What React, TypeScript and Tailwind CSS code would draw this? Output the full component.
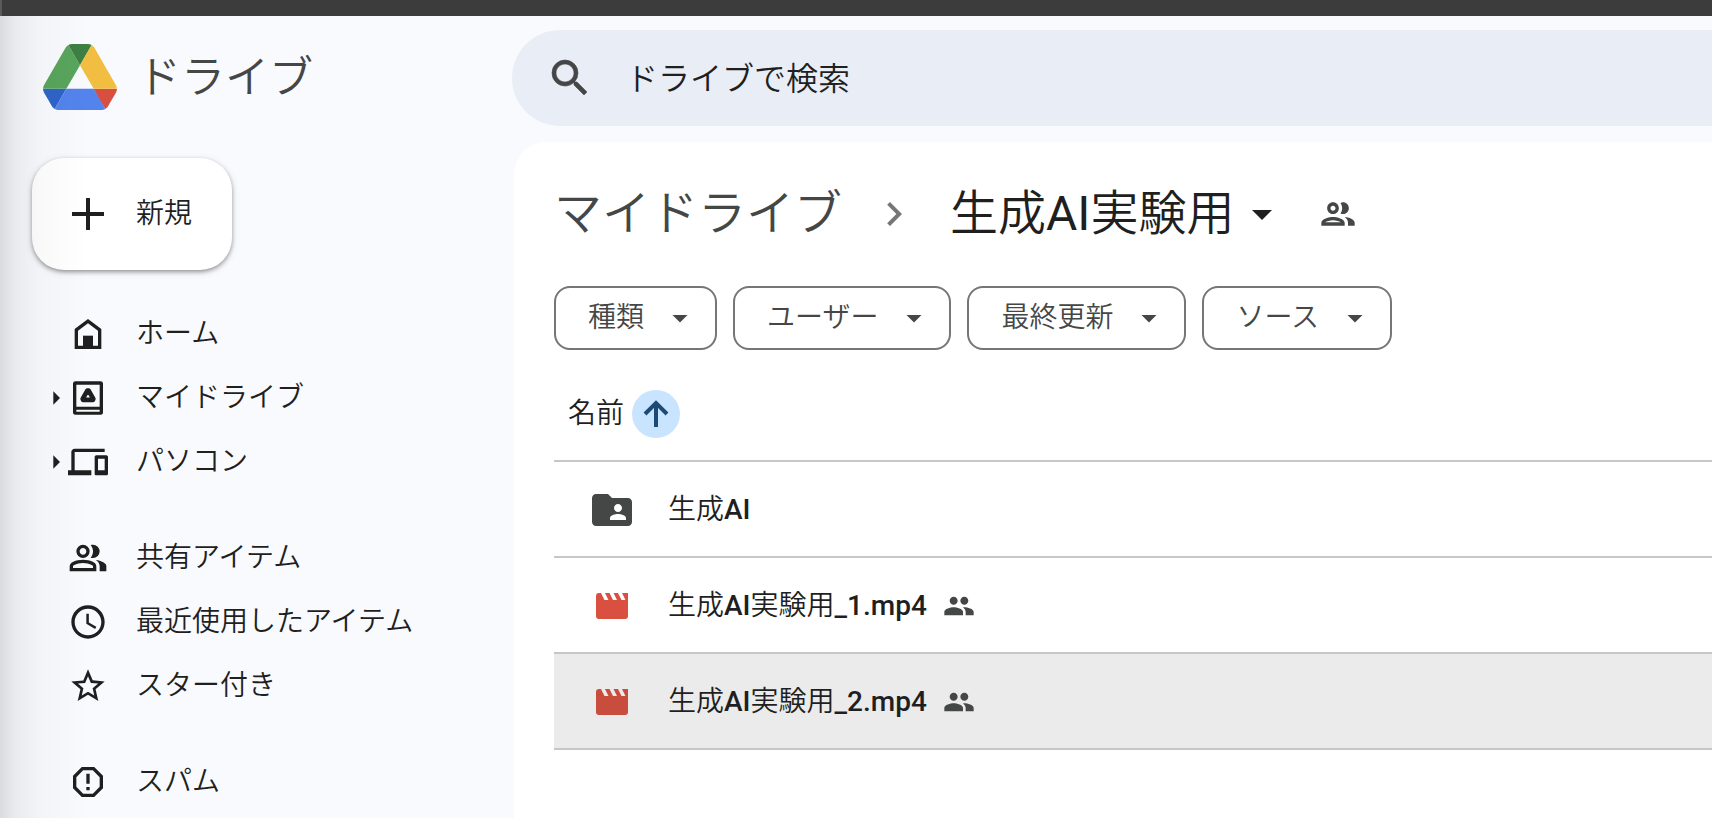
import type { ReactNode } from "react";
import {
  MdAccessTime,
  MdArrowDropDown,
  MdArrowRight,
  MdChevronRight,
  MdDevices,
  MdFolderShared,
  MdPeople,
  MdReportGmailerrorred,
  MdStarBorder,
} from "react-icons/md";

type NavItem = { label: string; icon: ReactNode; expandable?: boolean };

function HomeIcon() {
  return (
    <svg viewBox="0 0 24 24" className="size-10" fill="currentColor" aria-hidden="true">
      <path fillRule="evenodd" d="M4 21V9l8-6 8 6v12H4Zm2-2h12v-9l-6-4.5L6 10v9Z" />
      <path d="M9 13h6v7H9z" />
    </svg>
  );
}

function MyDriveIcon() {
  return (
    <svg viewBox="0 0 24 24" className="size-10" fill="currentColor" aria-hidden="true">
      <path
        fillRule="evenodd"
        d="M4.500 2h15A1.500 1.500 0 0 1 21 3.500v17a1.500 1.500 0 0 1-1.500 1.500h-15A1.500 1.500 0 0 1 3 20.500v-17A1.500 1.500 0 0 1 4.500 2ZM5 4v13.200h14V4H5Zm0 15v1.200h14V19H5Z"
      />
      <path d="M11.600 7.600h.8L15.200 12.500 14.900 13.100H9.100L8.800 12.500Z" fill="none" stroke="currentColor" strokeWidth="2.800" strokeLinejoin="round" />
    </svg>
  );
}

function SearchIcon() {
  return (
    <svg
      viewBox="0 0 24 24"
      className="size-12 shrink-0 text-[#444746]"
      fill="currentColor"
      stroke="currentColor"
      strokeWidth="0.300"
      aria-hidden="true"
    >
      <path d="M15.500 14h-.79l-.28-.27A6.471 6.471 0 0 0 16 9.500 6.500 6.500 0 1 0 9.500 16c1.610 0 3.090-.59 4.230-1.570l.27.28v.79l5 4.990L20.490 19l-4.990-5zm-6 0C7.010 14 5 11.990 5 9.500S7.010 5 9.500 5 14 7.010 14 9.500 11.990 14 9.500 14z" />
    </svg>
  );
}

function GroupIcon() {
  return (
    <svg viewBox="0 -960 960 960" className="size-10" fill="currentColor" aria-hidden="true">
      <path d="M40-160v-112q0-34 17.5-62.5T104-378q62-31 126-46.5T360-440q66 0 130 15.5T616-378q29 15 46.5 43.5T680-272v112H40Zm720 0v-120q0-44-24.5-84.5T666-434q51 6 96 20.5t84 35.5q36 20 55 44.5t19 53.5v120H760ZM360-480q-66 0-113-47t-47-113q0-66 47-113t113-47q66 0 113 47t47 113q0 66-47 113t-113 47Zm400-160q0 66-47 113t-113 47q-11 0-28-2.5t-28-5.500q27-32 41.5-71t14.5-81q0-42-14.5-81T544-792q14-5 28-6.5t28-1.5q66 0 113 47t47 113ZM120-240h480v-32q0-11-5.5-20T580-306q-54-27-109-40.5T360-360q-56 0-111 13.5T140-306q-9 5-14.5 14t-5.5 20v32Zm240-320q33 0 56.5-23.5T440-640q0-33-23.5-56.5T360-720q-33 0-56.500 23.5T280-640q0 33 23.5 56.5T360-560Z" />
    </svg>
  );
}

function SharedIcon() {
  return (
    <svg viewBox="0 0 24 24" className="size-10" fill="currentColor" aria-hidden="true">
      <path d="M9 13.75c-2.34 0-7 1.17-7 3.500V19h14v-1.75c0-2.33-4.66-3.500-7-3.500zM4.340 17c.84-.58 2.87-1.25 4.660-1.25s3.820.67 4.660 1.250H4.340zM9 12c1.930 0 3.500-1.570 3.500-3.500S10.930 5 9 5 5.500 6.570 5.500 8.500 7.070 12 9 12zm0-5c.83 0 1.500.67 1.500 1.500S9.830 10 9 10s-1.500-.67-1.500-1.500S8.170 7 9 7zm7.040 6.810c1.160.84 1.960 1.960 1.960 3.440V19h4v-1.750c0-2.020-3.500-3.170-5.960-3.440zM15 12c1.930 0 3.500-1.570 3.500-3.500S16.930 5 15 5c-.54 0-1.040.13-1.500.35.63.89 1 1.980 1 3.150s-.37 2.260-1 3.150c.46.22.96.35 1.500.35z" />
    </svg>
  );
}

function DriveLogo() {
  return (
    <svg viewBox="0 0 87.3 78" className="h-[66px] w-[74px]" aria-hidden="true">
      <path d="m6.6 66.85 3.85 6.65c.8 1.4 1.950 2.5 3.3 3.3l13.75-23.8h-27.5c0 1.55.4 3.1 1.2 4.5z" fill="#2f64c8" />
      <path d="m43.65 25-13.75-23.8c-1.350.8-2.5 1.9-3.3 3.3l-25.4 44a9.06 9.06 0 0 0-1.2 4.5h27.5z" fill="#58a55c" />
      <path d="m73.55 76.8c1.35-.8 2.5-1.9 3.3-3.3l1.6-2.75 7.65-13.25c.8-1.4 1.2-2.95 1.2-4.5h-27.502l5.852 11.5z" fill="#d94f3f" />
      <path d="m43.65 25 13.75-23.8c-1.35-.8-2.9-1.2-4.5-1.2h-18.5c-1.6 0-3.15.45-4.5 1.200z" fill="#3e7f42" />
      <path d="m59.8 53h-32.3l-13.75 23.8c1.35.8 2.9 1.2 4.5 1.2h50.8c1.6 0 3.15-.45 4.5-1.2z" fill="#5383ec" />
      <path d="m73.400 26.5-12.7-22c-.8-1.4-1.95-2.5-3.3-3.3l-13.75 23.8 16.15 28h27.450c0-1.550-.4-3.1-1.2-4.5z" fill="#f2be42" />
    </svg>
  );
}

function VideoIcon() {
  return (
    <svg viewBox="0 0 32 26" className="h-[26px] w-8" fill="currentColor" aria-hidden="true">
      <path d="M3 0h2l3.500 7h4L9 0h4.500l3.500 7h4l-3.500-7H22l3.500 7h4L26 0h6v23a3 3 0 0 1-3 3H3a3 3 0 0 1-3-3V3a3 3 0 0 1 3-3Z" />
    </svg>
  );
}

const navGroups: NavItem[][] = [
  [
    { label: "ホーム", icon: <HomeIcon /> },
    { label: "マイドライブ", icon: <MyDriveIcon />, expandable: true },
    { label: "パソコン", icon: <MdDevices className="size-10" />, expandable: true },
  ],
  [
    { label: "共有アイテム", icon: <GroupIcon /> },
    { label: "最近使用したアイテム", icon: <MdAccessTime className="size-10" /> },
    { label: "スター付き", icon: <MdStarBorder className="size-10" /> },
  ],
  [{ label: "スパム", icon: <MdReportGmailerrorred className="size-10" /> }],
];

const filters = ["種類", "ユーザー", "最終更新", "ソース"];

const files = [
  { name: "生成AI", kind: "folder", shared: false, active: false },
  { name: "生成AI実験用_1.mp4", kind: "video", shared: true, active: false },
  { name: "生成AI実験用_2.mp4", kind: "video", shared: true, active: true },
];

// Latin runs are set heavier than the Japanese around them
function FileName({ name }: { name: string }) {
  return (
    <>
      {name.split(/([\w.]+)/).map((part, i) => (
        <span key={i} className={i % 2 ? "font-medium" : ""}>{part}</span>
      ))}
    </>
  );
}

function Sidebar() {
  return (
    <aside className="relative w-[514px] shrink-0">
      <a href="#" className="mt-7 ml-[43px] flex h-[66px] items-center gap-5 text-[44px] leading-[66px] text-[#444746]">
        <DriveLogo />
        <span className="pt-0.5">ドライブ</span>
      </a>
      <button className="mt-12 ml-8 flex h-28 w-[200px] items-center rounded-[32px] bg-white pl-9 text-[28px] shadow-[0_2px_4px_rgba(0,0,0,0.35),0_2px_8px_rgba(0,0,0,0.1)]">
        <svg viewBox="0 0 40 40" className="size-10" stroke="currentColor" strokeWidth="4" aria-hidden="true">
          <path d="M20 4v32M4 20h32" />
        </svg>
        <span className="ml-7">新規</span>
      </button>
      <nav className="mt-8 flex flex-col gap-8">
        {navGroups.map((group, i) => (
          <ul key={i}>
            {group.map((item) => (
              <li key={item.label}>
                <a href="#" className="flex h-16 items-center text-[28px] leading-8">
                  <span className="ml-10 flex w-7 justify-center">
                    {item.expandable && <MdArrowRight className="-mr-1 size-8 shrink-0" />}
                  </span>
                  {item.icon}
                  <span className="ml-7">{item.label}</span>
                </a>
              </li>
            ))}
          </ul>
        ))}
      </nav>
      <div className="pointer-events-none absolute inset-y-0 left-0 w-24 bg-[linear-gradient(to_right,rgba(0,0,0,0.12)_0px,rgba(0,0,0,0.06)_16px,rgba(0,0,0,0.025)_40px,rgba(0,0,0,0)_90px)]" />
    </aside>
  );
}

export default function App() {
  return (
    <div className="flex h-screen flex-col overflow-hidden bg-[#f9fafe] font-['Roboto','Noto_Sans_CJK_JP',sans-serif] font-[350] text-[#1f1f1f]" lang="ja">
      <div className="h-4 shrink-0 border-l-2 border-[#5a5a5a] bg-[#3c3c3c]" />
      <div className="flex min-h-0 flex-1">
        <Sidebar />
        <div className="flex min-w-0 flex-1 flex-col">
          <label className="mt-[14px] -ml-0.5 flex h-24 shrink-0 items-center rounded-l-full bg-[#e8edf6] pl-[34px]">
            <SearchIcon />
            <input
              type="text"
              placeholder="ドライブで検索"
              aria-label="ドライブで検索"
              className="ml-8 min-w-0 flex-1 bg-transparent pt-0.5 text-[32px] outline-none placeholder:text-[#1f1f1f] placeholder:opacity-100"
            />
          </label>
          <main className="mt-4 flex-1 rounded-tl-[32px] bg-white pl-10">
            <div className="flex h-36 items-center text-[48px]">
              <a href="#" className="text-[#444746]">マイドライブ</a>
              <MdChevronRight className="mr-8 ml-7 size-12 text-[#747775]" />
              <button className="flex items-center">
                <span className="mr-1">
                  生成<span className="font-normal">AI</span>実験用
                </span>
                <MdArrowDropDown className="size-12" />
              </button>
              <button className="ml-8 text-[#444746]" aria-label="共有中">
                <SharedIcon />
              </button>
            </div>
            <div className="flex gap-4">
              {filters.map((label) => (
                <button
                  key={label}
                  className="flex h-16 items-center rounded-2xl border-2 border-[#747775] pr-[17px] pl-8 text-[28px] text-[#444746]"
                >
                  {label}
                  <MdArrowDropDown className="ml-[18px] size-9" />
                </button>
              ))}
            </div>
            <table className="mt-[15px] w-full border-collapse text-left text-[28px]">
              <thead>
                <tr className="h-24 border-b-2 border-[#c7c7c7]">
                  <th className="pt-0.5 pb-0 pl-[14px] font-[350]">
                    <button className="flex items-center gap-2">
                      名前
                      <span className="flex size-12 items-center justify-center rounded-full bg-[#c8e4ff] text-[#1c4a75]">
                        <svg viewBox="0 0 32 32" className="size-8" fill="none" stroke="currentColor" strokeWidth="4" aria-hidden="true">
                          <path d="M16 29V5M5 16 16 5l11 11" />
                        </svg>
                      </span>
                    </button>
                  </th>
                </tr>
              </thead>
              <tbody>
                {files.map((f) => (
                  <tr key={f.name} className={`h-24 border-b-2 border-[#c7c7c7] ${f.active ? "bg-[#ebebeb]" : ""}`}>
                    <td className="pt-0.5 pb-0 pl-[34px]">
                      <div className="flex items-center">
                        <span className={`flex w-12 justify-center ${f.active ? "text-[#c84d3c]" : "text-[#da5040]"}`}>
                          {f.kind === "folder" ? <MdFolderShared className="size-12 text-[#444746]" /> : <VideoIcon />}
                        </span>
                        <a href="#" className="ml-8">
                          <FileName name={f.name} />
                        </a>
                        {f.shared && <MdPeople className="ml-4 size-8 text-[#444746]" aria-label="共有中" />}
                      </div>
                    </td>
                  </tr>
                ))}
              </tbody>
            </table>
          </main>
        </div>
      </div>
    </div>
  );
}
